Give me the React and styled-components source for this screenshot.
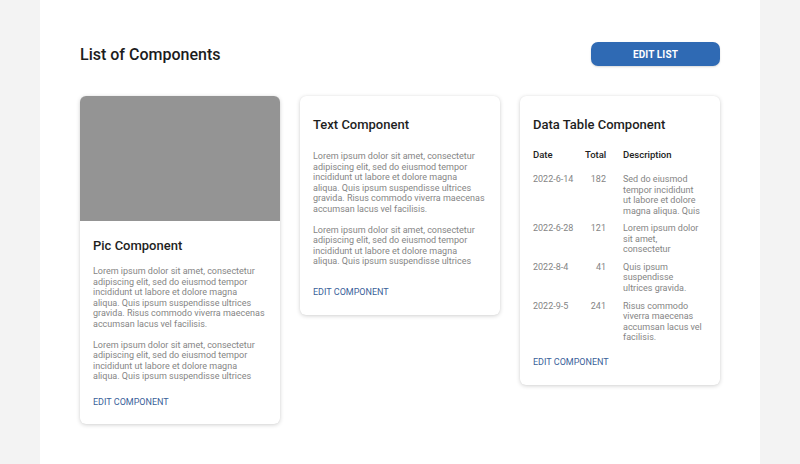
import React from "react";
import styled, { createGlobalStyle } from "styled-components";

const Global = createGlobalStyle`
  html, body { margin: 0; padding: 0; background: #f3f3f3; }
  body { font-family: Roboto, "Liberation Sans", sans-serif; }
  * { box-sizing: border-box; }
`;

const Page = styled.div`
  width: 720px;
  min-height: 464px;
  margin: 0 auto;
  background: #ffffff;
  padding: 42px 40px 40px;
`;

const Header = styled.div`
  display: flex;
  align-items: center;
  justify-content: space-between;
  height: 24px;
  margin-bottom: 30px;
`;

const Title = styled.h1`
  margin: 0;
  font-size: 16px;
  font-weight: 500;
  color: #1c1c1c;
`;

const Button = styled.button`
  width: 129px;
  height: 24px;
  border: none;
  border-radius: 7px;
  background: #2f6ab4;
  color: #fff;
  font-family: Roboto, "Liberation Sans", sans-serif;
  font-size: 10px;
  font-weight: 700;
  letter-spacing: 0.1px;
  box-shadow: 0 1px 2px rgba(0,0,0,0.15);
`;

const Cards = styled.div`
  display: flex;
  align-items: flex-start;
  gap: 20px;
`;

const Card = styled.div`
  width: 200px;
  background: #fff;
  border-radius: 6px;
  overflow: hidden;
  box-shadow: 0 1px 4px rgba(0,0,0,0.18), 0 0 1px rgba(0,0,0,0.08);
`;

const Pic = styled.div`
  height: 125px;
  background: #949494;
`;

const Body = styled.div`
  padding: ${(p) => p.$top}px 15px ${(p) => p.$bottom}px 13px;
`;

const CardTitle = styled.h2`
  margin: 0 0 ${(p) => p.$gap}px;
  font-size: 13px;
  font-weight: 500;
  line-height: 18px;
  color: #1e1e1e;
`;

const Para = styled.p`
  margin: 0 0 10.5px;
  font-size: 9px;
  font-weight: 400;
  line-height: 10.5px;
  color: #858585;
`;

const Link = styled.div`
  margin-top: ${(p) => p.$gap}px;
  font-size: 9px;
  line-height: 11px;
  color: #3b5f9a;
`;

const Table = styled.div`
  display: grid;
  grid-template-columns: 52px 21px 97px;
  font-size: 9px;
  line-height: 10.5px;
`;

const Th = styled.div`
  font-size: 9.5px;
  font-weight: 500;
  line-height: 12px;
  color: #222;
  padding-bottom: 13px;
  text-align: ${(p) => (p.$right ? "right" : "left")};
  padding-left: ${(p) => (p.$desc ? 17 : 0)}px;
`;

const Td = styled.div`
  color: #858585;
  padding-bottom: 7.2px;
  text-align: ${(p) => (p.$right ? "right" : "left")};
  padding-left: ${(p) => (p.$desc ? 17 : 0)}px;
`;

const lorem1 =
  "Lorem ipsum dolor sit amet, consectetur adipiscing elit, sed do eiusmod tempor incididunt ut labore et dolore magna aliqua. Quis ipsum suspendisse ultrices gravida. Risus commodo viverra maecenas accumsan lacus vel facilisis.";
const lorem2 =
  "Lorem ipsum dolor sit amet, consectetur adipiscing elit, sed do eiusmod tempor incididunt ut labore et dolore magna aliqua. Quis ipsum suspendisse ultrices";

const rows = [
  ["2022-6-14", "182", "Sed do eiusmod tempor incididunt ut labore et dolore magna aliqua. Quis"],
  ["2022-6-28", "121", "Lorem ipsum dolor sit amet, consectetur"],
  ["2022-8-4", "41", "Quis ipsum suspendisse ultrices gravida."],
  ["2022-9-5", "241", "Risus commodo viverra maecenas accumsan lacus vel facilisis."],
];

export default function App() {
  return (
    <>
      <Global />
      <Page>
        <Header>
          <Title>List of Components</Title>
          <Button>EDIT LIST</Button>
        </Header>
        <Cards>
          <Card>
            <Pic />
            <Body $top={16} $bottom={16}>
              <CardTitle $gap={11}>Pic Component</CardTitle>
              <Para>{lorem1}</Para>
              <Para>{lorem2}</Para>
              <Link $gap={15}>EDIT COMPONENT</Link>
            </Body>
          </Card>
          <Card>
            <Body $top={20} $bottom={17}>
              <CardTitle $gap={17}>Text Component</CardTitle>
              <Para>{lorem1}</Para>
              <Para>{lorem2}</Para>
              <Link $gap={20}>EDIT COMPONENT</Link>
            </Body>
          </Card>
          <Card>
            <Body $top={20} $bottom={17}>
              <CardTitle $gap={15}>Data Table Component</CardTitle>
              <Table>
                <Th>Date</Th>
                <Th $right>Total</Th>
                <Th $desc>Description</Th>
                {rows.map((r) => (
                  <React.Fragment key={r[0]}>
                    <Td>{r[0]}</Td>
                    <Td $right>{r[1]}</Td>
                    <Td $desc>{r[2]}</Td>
                  </React.Fragment>
                ))}
              </Table>
              <Link $gap={7}>EDIT COMPONENT</Link>
            </Body>
          </Card>
        </Cards>
      </Page>
    </>
  );
}
